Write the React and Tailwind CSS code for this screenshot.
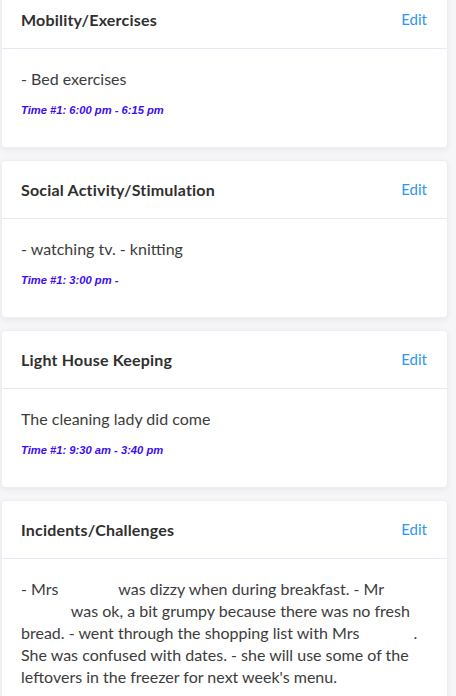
import React from 'react'

const Blank = ({ w }) => <span className="inline-block" style={{ width: w }} />

function Card({ title, children, time, first }) {
  return (
    <div
      className={`ml-px mr-[8px] bg-white rounded-[4px] border border-[#eceef4] shadow-[0_2px_6px_rgba(0,0,0,0.06)] ${first ? '-mt-[10px]' : 'mt-3'}`}
    >
      <div className="h-[58px] pl-[19px] pr-5 flex items-center justify-between border-b border-[#e6e9f5]">
        <h3 className="text-[16px] font-bold text-[#2f2f2f] tracking-[0.2px]">{title}</h3>
        <button className="text-[15px] text-[#2e96f3]">Edit</button>
      </div>
      <div className="pl-[19px] pr-5 pt-[19px] pb-[30px]">
        <p className="text-[16px] leading-[22px] text-[#3c3c3c]">{children}</p>
        {time && (
          <p className="mt-[13px] text-[11.2px] leading-[14px] font-bold italic text-[#3d0cf5] font-['Liberation_Sans',Arial,sans-serif]">
            {time}
          </p>
        )}
      </div>
    </div>
  )
}

export default function App() {
  return (
    <div className="min-h-[696px] bg-[#f6f6f9] overflow-hidden font-['Lato',sans-serif]">
      <Card first title="Mobility/Exercises" time="Time #1: 6:00 pm - 6:15 pm">
        - Bed exercises
      </Card>
      <Card title="Social Activity/Stimulation" time="Time #1: 3:00 pm -">
        - watching tv. - knitting
      </Card>
      <Card title="Light House Keeping" time="Time #1: 9:30 am - 3:40 pm">
        The cleaning lady did come
      </Card>
      <Card title="Incidents/Challenges">
        - Mrs <Blank w={52} /> was dizzy when during breakfast. - Mr <Blank w={46} /> was ok, a bit grumpy because
        there was no fresh bread. - went through the shopping list with Mrs <Blank w={50} />. She was confused with
        dates. - she will use some of the leftovers in the freezer for next week's menu.
      </Card>
    </div>
  )
}
